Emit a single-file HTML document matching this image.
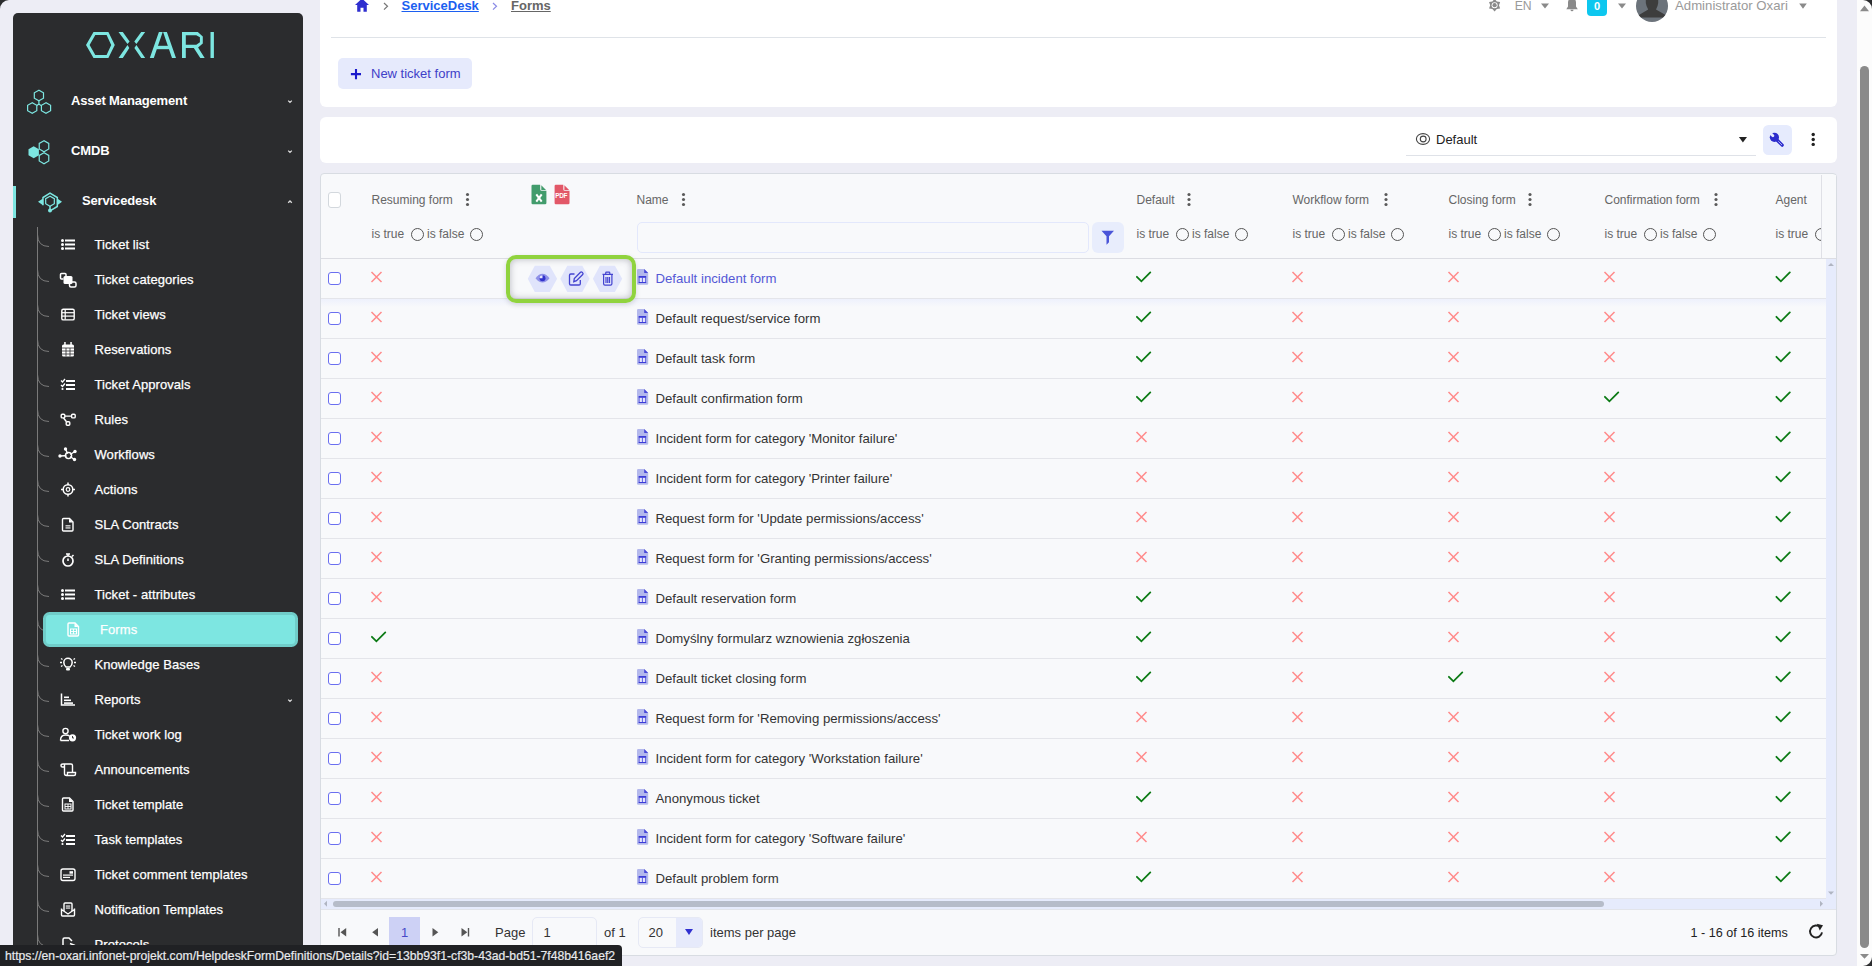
<!DOCTYPE html><html><head><meta charset="utf-8"><style>
*{box-sizing:border-box;margin:0;padding:0}
html,body{width:1872px;height:966px;overflow:hidden}
body{background:#ededf5;font-family:"Liberation Sans",sans-serif;position:relative;color:#333;font-size:13px}
.a{position:absolute;white-space:nowrap}
svg{position:absolute;overflow:visible}
#sb{position:absolute;left:13px;top:13px;width:290px;height:1000px;background:#2b2c2e;border-radius:5px}
.card{position:absolute;background:#fff;border-radius:6px}
.mi{position:absolute;color:#fff;font-size:13px;line-height:16px;height:16px;white-space:nowrap}
.top{font-weight:bold;letter-spacing:-0.15px}
.sub{-webkit-text-stroke:0.25px #fff;letter-spacing:0.08px}
.hd{position:absolute;color:#666;font-size:13px;line-height:16px;white-space:nowrap}
.rd{position:absolute;width:13px;height:13px;border:1px solid #555;border-radius:50%}
.cb{position:absolute;width:13px;height:13px;border:1px solid #6b6ff0;border-radius:3px;background:#fff}
.nm{position:absolute;color:#333;font-size:13px;line-height:16px;white-space:nowrap}
.sep{position:absolute;left:321px;width:1505px;height:1px;background:#e4e5ea}
</style></head><body>
<svg style="left:0;top:0" width="10" height="10"><path d="M0 0H9A9 9 0 0 0 0 9Z" fill="#2b2c2e"/></svg>
<div id="sb"></div>
<svg style="left:80px;top:25px" width="140" height="40" viewBox="80 25 140 40" fill="#7de6e1">
<path d="M86 44.9L93.5 32H108.4L114.8 44.9L108.4 57.9H93.5Z M89.6 44.9L95.3 54.9H106.6L111.2 44.9L106.6 35H95.3Z" fill-rule="evenodd"/>
<path d="M118.5 32H122.8L129.6 41.6L127.5 44.1Z M127.5 44.9L129.3 48L122.8 58H118.5Z M145.2 32H141.2L134.3 41.6L136.4 44.1Z M136.4 44.9L134.4 48L141.2 58H145.2Z"/>
<path d="M149.8 58L158.9 32H162.7L153.8 58Z M163.1 32H166.9L176 58H172Z"/>
<rect x="156.5" y="45.8" width="14" height="3.4"/>
<path d="M182 58V32H197.8L202.8 36.4V43.4L198.1 47.4L204.7 58H200.3L193.8 48H185.8V58Z M185.8 35.3V44.7H196.3L199.9 42.2V37.3L196.3 35.3Z" fill-rule="evenodd"/>
<rect x="210.5" y="32" width="3.4" height="26"/>
</svg>
<svg style="left:0;top:0" width="1" height="1"><g fill="none" stroke="#7de6e1" stroke-width="1.2">
<path d="M38.90,90.20 L34.31,92.85 L34.31,98.15 L38.90,100.80 L43.49,98.15 L43.49,92.85Z"/><path d="M32.20,102.70 L27.61,105.35 L27.61,110.65 L32.20,113.30 L36.79,110.65 L36.79,105.35Z"/><path d="M46.00,102.70 L41.41,105.35 L41.41,110.65 L46.00,113.30 L50.59,110.65 L50.59,105.35Z"/>
<path d="M38.9 100.8V104 M38.9 104L36.9 105.5 M38.9 104L41 105.5"/></g></svg>
<svg style="left:0;top:0" width="1" height="1"><path d="M33.70,146.20 L28.50,149.20 L28.50,155.20 L33.70,158.20 L38.90,155.20 L38.90,149.20Z" fill="#7de6e1"/><g fill="none" stroke="#7de6e1" stroke-width="1.2">
<path d="M44.00,140.70 L39.24,143.45 L39.24,148.95 L44.00,151.70 L48.76,148.95 L48.76,143.45Z"/><path d="M44.00,152.70 L39.24,155.45 L39.24,160.95 L44.00,163.70 L48.76,160.95 L48.76,155.45Z"/></g></svg>
<svg style="left:0;top:0" width="1" height="1"><g fill="none" stroke="#7de6e1" stroke-width="1.5">
<path d="M43 205.2V197.5L50 193.2L57.3 197.5V206.5L50.5 210.6"/><path d="M50 206V209.5"/></g>
<path d="M50.00,196.20 L45.67,198.70 L45.67,203.70 L50.00,206.20 L54.33,203.70 L54.33,198.70Z" fill="none" stroke="#7de6e1" stroke-width="1.2"/>
<path d="M38 201.8L43 198.4V205.2Z M62 201.8L57.3 198.4V205.2Z" fill="#7de6e1"/><circle cx="50" cy="210.5" r="2" fill="#7de6e1"/></svg>
<div class="mi top" style="left:71px;top:93px">Asset Management</div>
<div class="mi top" style="left:71px;top:143px">CMDB</div>
<div class="mi top" style="left:82px;top:193px">Servicedesk</div>
<svg style="left:0;top:0" width="1" height="1"><path d="M288.2 100.6 L290 102.4 L291.8 100.6" fill="none" stroke="#ddd" stroke-width="1.3"/></svg>
<svg style="left:0;top:0" width="1" height="1"><path d="M288.2 150.6 L290 152.4 L291.8 150.6" fill="none" stroke="#ddd" stroke-width="1.3"/></svg>
<svg style="left:0;top:0" width="1" height="1"><path d="M288.2 202.8 L290 201.0 L291.8 202.8" fill="none" stroke="#ddd" stroke-width="1.3"/></svg>
<svg style="left:0;top:0" width="1" height="1"><path d="M288.2 699.6 L290 701.4 L291.8 699.6" fill="none" stroke="#ddd" stroke-width="1.3"/></svg>
<div class="a" style="left:13px;top:186px;width:3px;height:32px;background:#7de6e1"></div>
<div class="a" style="left:37px;top:227px;width:1px;height:740px;background:#7a7a7a"></div>
<svg style="left:0;top:0" width="1" height="1"><path d="M37.5 234.5 Q37.5 246.5 49 246.5" fill="none" stroke="#7a7a7a" stroke-width="1"/></svg>
<svg style="left:0;top:0" width="1" height="1"><circle cx="62.5" cy="240.5" r="1.5" fill="#fff"/><rect x="65" y="239.5" width="10" height="2" fill="#fff"/><circle cx="62.5" cy="244.5" r="1.5" fill="#fff"/><rect x="65" y="243.5" width="10" height="2" fill="#fff"/><circle cx="62.5" cy="248.5" r="1.5" fill="#fff"/><rect x="65" y="247.5" width="10" height="2" fill="#fff"/></svg>
<div class="mi sub" style="left:94.5px;top:236.6px">Ticket list</div>
<svg style="left:0;top:0" width="1" height="1"><path d="M37.5 269.5 Q37.5 281.5 49 281.5" fill="none" stroke="#7a7a7a" stroke-width="1"/></svg>
<svg style="left:0;top:0" width="1" height="1"><path d="M66 277.0V274.5Q66 273.5 65 273.5H61.5Q60.5 273.5 60.5 274.5V278.0Q60.5 279.0 61.5 279.0H63.5" fill="none" stroke="#fff" stroke-width="1.5"/><rect x="63.5" y="276.0" width="9" height="8" rx="1.5" fill="#fff"/><path d="M71 282.0H74.5Q76 282.0 76 283.5V285.5Q76 287.0 74.5 287.0H71Q69.5 287.0 69.5 285.5V284.0" fill="none" stroke="#fff" stroke-width="1.5"/></svg>
<div class="mi sub" style="left:94.5px;top:271.6px">Ticket categories</div>
<svg style="left:0;top:0" width="1" height="1"><path d="M37.5 304.5 Q37.5 316.5 49 316.5" fill="none" stroke="#7a7a7a" stroke-width="1"/></svg>
<svg style="left:0;top:0" width="1" height="1"><rect x="61.8" y="309.3" width="12.4" height="10.6" rx="1.5" fill="none" stroke="#fff" stroke-width="1.4"/><rect x="62" y="312.09999999999997" width="12" height="1.2" fill="#fff"/><rect x="62" y="315.5" width="12" height="1.2" fill="#fff"/><rect x="64.6" y="309.5" width="1.2" height="10" fill="#fff"/></svg>
<div class="mi sub" style="left:94.5px;top:306.6px">Ticket views</div>
<svg style="left:0;top:0" width="1" height="1"><path d="M37.5 339.5 Q37.5 351.5 49 351.5" fill="none" stroke="#7a7a7a" stroke-width="1"/></svg>
<svg style="left:0;top:0" width="1" height="1"><rect x="62" y="344.5" width="12" height="12" rx="1.5" fill="#fff"/><rect x="64.2" y="342.0" width="1.5" height="3" fill="#fff"/><rect x="70.3" y="342.0" width="1.5" height="3" fill="#fff"/><path d="M62 348.0H74 M62 351.0H74 M62 354.0H74 M66 348.0V356.5 M70 348.0V356.5" stroke="#2b2c2e" stroke-width="0.8"/></svg>
<div class="mi sub" style="left:94.5px;top:341.6px">Reservations</div>
<svg style="left:0;top:0" width="1" height="1"><path d="M37.5 374.5 Q37.5 386.5 49 386.5" fill="none" stroke="#7a7a7a" stroke-width="1"/></svg>
<svg style="left:0;top:0" width="1" height="1"><path d="M61 380.5L62.5 382.0L65 379.0" fill="none" stroke="#fff" stroke-width="1.3"/><path d="M61 385.0L62.5 386.5L65 383.5" fill="none" stroke="#fff" stroke-width="1.3"/><circle cx="62.5" cy="389.0" r="1.1" fill="#fff"/><rect x="66" y="380.0" width="9" height="2" fill="#fff"/><rect x="66" y="384.0" width="9" height="2" fill="#fff"/><rect x="66" y="388.0" width="9" height="2" fill="#fff"/></svg>
<div class="mi sub" style="left:94.5px;top:376.6px">Ticket Approvals</div>
<svg style="left:0;top:0" width="1" height="1"><path d="M37.5 409.5 Q37.5 421.5 49 421.5" fill="none" stroke="#7a7a7a" stroke-width="1"/></svg>
<svg style="left:0;top:0" width="1" height="1"><rect x="61.2" y="414.3" width="3.6" height="3.6" rx="1" fill="none" stroke="#fff" stroke-width="1.4"/><rect x="71.6" y="414.3" width="3.6" height="3.6" rx="1" fill="none" stroke="#fff" stroke-width="1.4"/><rect x="66.2" y="421.7" width="3.6" height="3.6" rx="1" fill="none" stroke="#fff" stroke-width="1.4"/><path d="M65 416.1H71.4 M63.5 418.0L66.5 421.7" stroke="#fff" stroke-width="1.4"/></svg>
<div class="mi sub" style="left:94.5px;top:411.6px">Rules</div>
<svg style="left:0;top:0" width="1" height="1"><path d="M37.5 444.5 Q37.5 456.5 49 456.5" fill="none" stroke="#7a7a7a" stroke-width="1"/></svg>
<svg style="left:0;top:0" width="1" height="1"><circle cx="68.5" cy="455.5" r="3" fill="none" stroke="#fff" stroke-width="1.6"/><path d="M68.5 455.5L65.5 449.0 M68.5 455.5L75 451.5 M68.5 455.5L60 456.0 M68.5 455.5L74.5 459.5" stroke="#fff" stroke-width="1.4"/><circle cx="68.5" cy="455.5" r="2" fill="#2b2c2e"/><circle cx="65.5" cy="449.0" r="1.7" fill="#fff"/><circle cx="75" cy="451.5" r="1.7" fill="#fff"/><circle cx="60" cy="456.0" r="1.7" fill="#fff"/><circle cx="74.5" cy="459.5" r="1.7" fill="#fff"/></svg>
<div class="mi sub" style="left:94.5px;top:446.6px">Workflows</div>
<svg style="left:0;top:0" width="1" height="1"><path d="M37.5 479.5 Q37.5 491.5 49 491.5" fill="none" stroke="#7a7a7a" stroke-width="1"/></svg>
<svg style="left:0;top:0" width="1" height="1"><circle cx="68" cy="489.5" r="4.8" fill="none" stroke="#fff" stroke-width="1.5"/><circle cx="68" cy="489.5" r="1.8" fill="none" stroke="#fff" stroke-width="1.2"/><path d="M68 482.5V485.0 M68 494.0V496.5 M61 489.5H63.5 M72.5 489.5H75" stroke="#fff" stroke-width="1.5"/></svg>
<div class="mi sub" style="left:94.5px;top:481.6px">Actions</div>
<svg style="left:0;top:0" width="1" height="1"><path d="M37.5 514.5 Q37.5 526.5 49 526.5" fill="none" stroke="#7a7a7a" stroke-width="1"/></svg>
<svg style="left:0;top:0" width="1" height="1"><path d="M63.5 518.5H69.5L73 522.0V530.0Q73 531.0 72 531.0H63.5Q62.5 531.0 62.5 530.0V519.5Q62.5 518.5 63.5 518.5Z" fill="none" stroke="#fff" stroke-width="1.4"/><rect x="65.5" y="525.3" width="5" height="1.1" fill="#fff"/><rect x="65.5" y="527.4" width="5" height="1.1" fill="#fff"/><path d="M69 518.5V522.5H73Z" fill="#fff"/></svg>
<div class="mi sub" style="left:94.5px;top:516.6px">SLA Contracts</div>
<svg style="left:0;top:0" width="1" height="1"><path d="M37.5 549.5 Q37.5 561.5 49 561.5" fill="none" stroke="#7a7a7a" stroke-width="1"/></svg>
<svg style="left:0;top:0" width="1" height="1"><circle cx="68" cy="561.0" r="5" fill="none" stroke="#fff" stroke-width="1.7"/><path d="M66 554.0H70 M68 554.0V556.0 M68 561.0V558.5 M72 556.5L73.5 555.0" stroke="#fff" stroke-width="1.5"/></svg>
<div class="mi sub" style="left:94.5px;top:551.6px">SLA Definitions</div>
<svg style="left:0;top:0" width="1" height="1"><path d="M37.5 584.5 Q37.5 596.5 49 596.5" fill="none" stroke="#7a7a7a" stroke-width="1"/></svg>
<svg style="left:0;top:0" width="1" height="1"><circle cx="62.5" cy="590.5" r="1.5" fill="#fff"/><rect x="65" y="589.5" width="10" height="2" fill="#fff"/><circle cx="62.5" cy="594.5" r="1.5" fill="#fff"/><rect x="65" y="593.5" width="10" height="2" fill="#fff"/><circle cx="62.5" cy="598.5" r="1.5" fill="#fff"/><rect x="65" y="597.5" width="10" height="2" fill="#fff"/></svg>
<div class="mi sub" style="left:94.5px;top:586.6px">Ticket - attributes</div>
<svg style="left:0;top:0" width="1" height="1"><path d="M37.5 619.5 Q37.5 631.5 49 631.5" fill="none" stroke="#7a7a7a" stroke-width="1"/></svg>
<div class="a" style="left:43px;top:612.0px;width:255px;height:35px;background:#7de6e1;border-radius:6.5px;border:3px solid #70cdc9"></div>
<svg style="left:0;top:0" width="1" height="1"><path d="M69.0 623.0H75.0L78.5 626.5V635.0Q78.5 636.0 77.5 636.0H69.0Q68.0 636.0 68.0 635.0V624.0Q68.0 623.0 69.0 623.0Z" fill="none" stroke="#fff" stroke-width="1.4"/><path d="M74.5 623.0V627.0H78.5Z" fill="#fff"/><rect x="70.5" y="629.0" width="6" height="5" fill="none" stroke="#fff" stroke-width="1"/><path d="M70.5 631.5H76.5 M73.5 629.0V634.0" stroke="#fff" stroke-width="0.9"/></svg>
<div class="mi sub" style="left:100px;top:621.6px">Forms</div>
<svg style="left:0;top:0" width="1" height="1"><path d="M37.5 654.5 Q37.5 666.5 49 666.5" fill="none" stroke="#7a7a7a" stroke-width="1"/></svg>
<svg style="left:0;top:0" width="1" height="1"><path d="M66 667.0Q63.8 665.0 63.8 662.5A4.2 4.2 0 0 1 72.2 662.5Q72.2 665.0 70 667.0Z" fill="none" stroke="#fff" stroke-width="1.5"/><rect x="66" y="668.0" width="4" height="2.5" rx="1" fill="#fff"/><path d="M60 662.5H62 M74 662.5H76 M61 658.5L62.5 659.5 M75 658.5L73.5 659.5 M61 666.5L62.5 665.5 M75 666.5L73.5 665.5" stroke="#fff" stroke-width="1.3"/></svg>
<div class="mi sub" style="left:94.5px;top:656.6px">Knowledge Bases</div>
<svg style="left:0;top:0" width="1" height="1"><path d="M37.5 689.5 Q37.5 701.5 49 701.5" fill="none" stroke="#7a7a7a" stroke-width="1"/></svg>
<svg style="left:0;top:0" width="1" height="1"><path d="M61.5 693.5V705.0H75" fill="none" stroke="#fff" stroke-width="1.5"/><rect x="64" y="696.5" width="5" height="1.6" fill="#fff"/><rect x="64" y="699.5" width="7" height="1.6" fill="#fff"/><rect x="64" y="702.3" width="9" height="1.6" fill="#fff"/></svg>
<div class="mi sub" style="left:94.5px;top:691.6px">Reports</div>
<svg style="left:0;top:0" width="1" height="1"><path d="M37.5 724.5 Q37.5 736.5 49 736.5" fill="none" stroke="#7a7a7a" stroke-width="1"/></svg>
<svg style="left:0;top:0" width="1" height="1"><circle cx="65.5" cy="731.0" r="2.6" fill="none" stroke="#fff" stroke-width="1.4"/><path d="M60.5 740.5Q60.5 735.0 65.5 735.0Q68.5 735.0 69.5 736.0 M60.5 740.5H69" fill="none" stroke="#fff" stroke-width="1.4"/><circle cx="72.5" cy="737.8" r="3.6" fill="#fff"/><path d="M72.5 736.0V738.0H74" stroke="#2b2c2e" stroke-width="0.9" fill="none"/></svg>
<div class="mi sub" style="left:94.5px;top:726.6px">Ticket work log</div>
<svg style="left:0;top:0" width="1" height="1"><path d="M37.5 759.5 Q37.5 771.5 49 771.5" fill="none" stroke="#7a7a7a" stroke-width="1"/></svg>
<svg style="left:0;top:0" width="1" height="1"><path d="M63 764.0H71Q72.5 764.0 72.5 765.5V772.0 M64.5 764.0V773.5Q64.5 775.5 66.5 775.5H74Q75.5 775.5 75.5 774.0V772.5H67.5V774.0Q67.5 775.5 66 775.5 M63 764.0Q61 764.0 61 765.7Q61 767.0 62.5 767.0H64.5" fill="none" stroke="#fff" stroke-width="1.4"/></svg>
<div class="mi sub" style="left:94.5px;top:761.6px">Announcements</div>
<svg style="left:0;top:0" width="1" height="1"><path d="M37.5 794.5 Q37.5 806.5 49 806.5" fill="none" stroke="#7a7a7a" stroke-width="1"/></svg>
<svg style="left:0;top:0" width="1" height="1"><path d="M63.5 798.0H69.5L73 801.5V810.0Q73 811.0 72 811.0H63.5Q62.5 811.0 62.5 810.0V799.0Q62.5 798.0 63.5 798.0Z" fill="none" stroke="#fff" stroke-width="1.4"/><path d="M69 798.0V802.0H73Z" fill="#fff"/><rect x="65" y="804.0" width="6" height="5" fill="none" stroke="#fff" stroke-width="1"/><path d="M65 806.5H71 M68 804.0V809.0" stroke="#fff" stroke-width="0.9"/></svg>
<div class="mi sub" style="left:94.5px;top:796.6px">Ticket template</div>
<svg style="left:0;top:0" width="1" height="1"><path d="M37.5 829.5 Q37.5 841.5 49 841.5" fill="none" stroke="#7a7a7a" stroke-width="1"/></svg>
<svg style="left:0;top:0" width="1" height="1"><path d="M61 835.5L62.5 837.0L65 834.0" fill="none" stroke="#fff" stroke-width="1.3"/><path d="M61 840.0L62.5 841.5L65 838.5" fill="none" stroke="#fff" stroke-width="1.3"/><circle cx="62.5" cy="844.0" r="1.1" fill="#fff"/><rect x="66" y="835.0" width="9" height="2" fill="#fff"/><rect x="66" y="839.0" width="9" height="2" fill="#fff"/><rect x="66" y="843.0" width="9" height="2" fill="#fff"/></svg>
<div class="mi sub" style="left:94.5px;top:831.6px">Task templates</div>
<svg style="left:0;top:0" width="1" height="1"><path d="M37.5 864.5 Q37.5 876.5 49 876.5" fill="none" stroke="#7a7a7a" stroke-width="1"/></svg>
<svg style="left:0;top:0" width="1" height="1"><rect x="61" y="869.0" width="14" height="11.5" rx="2" fill="none" stroke="#fff" stroke-width="1.4"/><rect x="69.5" y="871.2" width="3.5" height="2.5" fill="#fff"/><rect x="63" y="874.5" width="10" height="1.2" fill="#fff"/><rect x="63" y="876.8" width="7" height="1.2" fill="#fff"/></svg>
<div class="mi sub" style="left:94.5px;top:866.6px">Ticket comment templates</div>
<svg style="left:0;top:0" width="1" height="1"><path d="M37.5 899.5 Q37.5 911.5 49 911.5" fill="none" stroke="#7a7a7a" stroke-width="1"/></svg>
<svg style="left:0;top:0" width="1" height="1"><path d="M61.5 908.5V915.0Q61.5 916.0 62.5 916.0H73.5Q74.5 916.0 74.5 915.0V908.5 M61.5 909.5L68 914.0L74.5 909.5" fill="none" stroke="#fff" stroke-width="1.4"/><path d="M64 911.0V904.0Q64 903.0 65 903.0H71Q72 903.0 72 904.0V911.0" fill="none" stroke="#fff" stroke-width="1.4"/><rect x="65.8" y="905.5" width="4.4" height="1.1" fill="#fff"/><rect x="65.8" y="907.5" width="4.4" height="1.1" fill="#fff"/></svg>
<div class="mi sub" style="left:94.5px;top:901.6px">Notification Templates</div>
<svg style="left:0;top:0" width="1" height="1"><path d="M37.5 934.5 Q37.5 946.5 49 946.5" fill="none" stroke="#7a7a7a" stroke-width="1"/></svg>
<svg style="left:0;top:0" width="1" height="1"><path d="M63 952.5V939.5Q63 938.0 64.5 938.0H69L72 941.0" fill="none" stroke="#fff" stroke-width="1.5"/><path d="M70 943.5L75 945.5" stroke="#fff" stroke-width="1.5"/></svg>
<div class="mi sub" style="left:94.5px;top:936.6px">Protocols</div>
<div class="card" style="left:320px;top:-10px;width:1517px;height:117px"></div>
<div class="card" style="left:320px;top:117px;width:1517px;height:46px"></div>
<div class="a" style="left:320px;top:173px;width:1517px;height:783px;background:#f8f9fb;border:1px solid #d8dce2;border-radius:4px"></div>
<svg style="left:0;top:0" width="1" height="1"><path d="M362 -1.5L355 5H357.2V11.8H360.5V7.8H363.5V11.8H366.8V5H369Z" fill="#2f2fcf"/></svg>
<svg style="left:0;top:0" width="1" height="1"><path d="M384 3L387.5 6.3L384 9.6" fill="none" stroke="#777" stroke-width="1.2"/><path d="M493 3L496.5 6.3L493 9.6" fill="none" stroke="#8a8ae6" stroke-width="1.2"/></svg>
<div class="a" style="left:401.5px;top:-2.5px;font-size:13px;line-height:15px;font-weight:bold;color:#1c5ff0;text-decoration:underline">ServiceDesk</div>
<div class="a" style="left:511px;top:-2.5px;font-size:13px;line-height:15px;font-weight:bold;color:#666;text-decoration:underline">Forms</div>
<svg style="left:0;top:0" width="1" height="1"><g transform="translate(1494.6 5.2)"><polygon points="0.00,-6.40 2.20,-3.81 5.54,-3.20 4.40,0.00 5.54,3.20 2.20,3.81 0.00,6.40 -2.20,3.81 -5.54,3.20 -4.40,0.00 -5.54,-3.20 -2.20,-3.81" fill="#8a8a8a"/><circle r="3" fill="#fff"/><circle r="2.1" fill="#8a8a8a"/></g></svg>
<div class="a" style="left:1514.7px;top:-1.5px;font-size:12.2px;line-height:15px;color:#9a9a9a">EN</div>
<svg style="left:0;top:0" width="1" height="1"><path d="M1541 3.5H1549L1545 8.6Z M1618 3.5H1626L1622 8.6Z M1799.2 3.5H1806.8L1803 8.7Z" fill="#8a8a8a"/></svg>
<svg style="left:0;top:0" width="1" height="1"><path d="M1572 -2C1569.5 -2 1568 0 1568 2.5V6.5L1566.3 9.3H1577.8L1576 6.5V2.5C1576 0 1574.5 -2 1572 -2Z M1570.5 9.8H1573.5A1.5 1.5 0 0 1 1570.5 9.8Z" fill="#8a8a8a"/></svg>
<div class="a" style="left:1587px;top:-5px;width:20px;height:21px;background:#0dc7ef;border-radius:4px;color:#fff;font-weight:bold;font-size:11px;line-height:21px;text-align:center;padding-top:1px">0</div>
<svg style="left:0;top:0" width="1" height="1"><defs><clipPath id="av"><circle cx="1652" cy="6" r="16"/></clipPath></defs><circle cx="1652" cy="6" r="16" fill="#6c737b"/><g clip-path="url(#av)" fill="#3d3d3d"><path d="M1645.8 -4V3Q1646.3 6.5 1648.2 9.6L1638.5 15.3V17.6H1666V15.3L1656 9.6Q1657.8 6.5 1658.2 3V-4Z"/></g></svg>
<div class="a" style="left:1675px;top:-2px;font-size:13.2px;line-height:15px;color:#9a9a9a">Administrator Oxari</div>
<div class="a" style="left:331px;top:37px;width:1495px;height:1px;background:#dfe3e8"></div>
<div class="a" style="left:338px;top:58px;width:134px;height:31px;background:#e6eafc;border-radius:5px"></div>
<svg style="left:0;top:0" width="1" height="1"><path d="M356 69V79.2 M350.9 74.1H361" stroke="#1a1acc" stroke-width="2.1"/></svg>
<div class="a" style="left:371px;top:66px;font-size:13px;line-height:16px;color:#4040c8">New ticket form</div>
<div class="a" style="left:1406px;top:155px;width:350px;height:1px;background:#dfe2e8"></div>
<svg style="left:0;top:0" width="1" height="1"><g fill="none" stroke="#444" stroke-width="1.1"><ellipse cx="1423" cy="139" rx="6.6" ry="5.4"/><circle cx="1423.2" cy="139" r="2.9"/></g></svg>
<div class="a" style="left:1436px;top:131.5px;font-size:13px;line-height:16px;color:#222">Default</div>
<svg style="left:0;top:0" width="1" height="1"><path d="M1738.9 137H1747L1742.9 142.6Z" fill="#222"/></svg>
<div class="a" style="left:1763px;top:125px;width:29px;height:30px;background:#e6ebfd;border-radius:5.5px"></div>
<svg style="left:0;top:0" width="1" height="1"><path d="M1777 140L1782.2 145.2" stroke="#2c2ccc" stroke-width="3.2" stroke-linecap="round"/><path d="M1778.3 141.3L1782 145" stroke="#c8cdf5" stroke-width="0.8"/><circle cx="1774.4" cy="137.3" r="4.6" fill="#2c2ccc"/><path d="M1768.8 131.7L1772.9 135.8" stroke="#e6ebfd" stroke-width="2.8" stroke-linecap="round"/></svg>
<svg style="left:0;top:0" width="1" height="1"><g fill="#222"><circle cx="1813.2" cy="134.5" r="1.7"/><circle cx="1813.2" cy="139.5" r="1.7"/><circle cx="1813.2" cy="144.4" r="1.7"/></g></svg>
<div class="a" style="left:328px;top:192px;width:13px;height:15.5px;border:1px solid #d3d8dd;border-radius:3px;background:#fff"></div>
<div class="hd" style="left:371.5px;top:192.3px;font-size:12px">Resuming form</div>
<svg style="left:0;top:0" width="1" height="1"><g fill="#5a5a5a"><circle cx="467.5" cy="194.5" r="1.55"/><circle cx="467.5" cy="199.5" r="1.55"/><circle cx="467.5" cy="204.5" r="1.55"/></g></svg>
<div class="hd" style="left:371.5px;top:226px;font-size:12px">is true</div>
<div class="rd" style="left:411.0px;top:227.5px"></div>
<div class="hd" style="left:427.0px;top:226px;font-size:12px">is false</div>
<div class="rd" style="left:470.0px;top:227.5px"></div>
<div class="hd" style="left:636.5px;top:192.3px;font-size:12px">Name</div>
<svg style="left:0;top:0" width="1" height="1"><g fill="#5a5a5a"><circle cx="683.5" cy="194.5" r="1.55"/><circle cx="683.5" cy="199.5" r="1.55"/><circle cx="683.5" cy="204.5" r="1.55"/></g></svg>
<div class="hd" style="left:1136.5px;top:192.3px;font-size:12px">Default</div>
<svg style="left:0;top:0" width="1" height="1"><g fill="#5a5a5a"><circle cx="1189" cy="194.5" r="1.55"/><circle cx="1189" cy="199.5" r="1.55"/><circle cx="1189" cy="204.5" r="1.55"/></g></svg>
<div class="hd" style="left:1136.5px;top:226px;font-size:12px">is true</div>
<div class="rd" style="left:1176.0px;top:227.5px"></div>
<div class="hd" style="left:1192.0px;top:226px;font-size:12px">is false</div>
<div class="rd" style="left:1235.0px;top:227.5px"></div>
<div class="hd" style="left:1292.5px;top:192.3px;font-size:12px">Workflow form</div>
<svg style="left:0;top:0" width="1" height="1"><g fill="#5a5a5a"><circle cx="1386" cy="194.5" r="1.55"/><circle cx="1386" cy="199.5" r="1.55"/><circle cx="1386" cy="204.5" r="1.55"/></g></svg>
<div class="hd" style="left:1292.5px;top:226px;font-size:12px">is true</div>
<div class="rd" style="left:1332.0px;top:227.5px"></div>
<div class="hd" style="left:1348.0px;top:226px;font-size:12px">is false</div>
<div class="rd" style="left:1391.0px;top:227.5px"></div>
<div class="hd" style="left:1448.5px;top:192.3px;font-size:12px">Closing form</div>
<svg style="left:0;top:0" width="1" height="1"><g fill="#5a5a5a"><circle cx="1530" cy="194.5" r="1.55"/><circle cx="1530" cy="199.5" r="1.55"/><circle cx="1530" cy="204.5" r="1.55"/></g></svg>
<div class="hd" style="left:1448.5px;top:226px;font-size:12px">is true</div>
<div class="rd" style="left:1488.0px;top:227.5px"></div>
<div class="hd" style="left:1504.0px;top:226px;font-size:12px">is false</div>
<div class="rd" style="left:1547.0px;top:227.5px"></div>
<div class="hd" style="left:1604.5px;top:192.3px;font-size:12px">Confirmation form</div>
<svg style="left:0;top:0" width="1" height="1"><g fill="#5a5a5a"><circle cx="1716" cy="194.5" r="1.55"/><circle cx="1716" cy="199.5" r="1.55"/><circle cx="1716" cy="204.5" r="1.55"/></g></svg>
<div class="hd" style="left:1604.5px;top:226px;font-size:12px">is true</div>
<div class="rd" style="left:1644.0px;top:227.5px"></div>
<div class="hd" style="left:1660.0px;top:226px;font-size:12px">is false</div>
<div class="rd" style="left:1703.0px;top:227.5px"></div>
<div class="hd" style="left:1775.5px;top:192.3px;font-size:12px">Agent</div>
<div class="hd" style="left:1775.5px;top:226px;font-size:12px">is true</div>
<div class="rd" style="left:1815.0px;top:227.5px"></div>
<div class="a" style="left:637px;top:222px;width:452px;height:31px;border:1px solid #e3e8fc;border-radius:5px;background:#f8f9fb"></div>
<div class="a" style="left:1092px;top:222px;width:32px;height:31px;background:#e8edfc;border-radius:6px"></div>
<svg style="left:0;top:0" width="1" height="1"><path d="M1101.5 230.8H1114L1109 236.3V242.3L1106.5 244.7V236.3Z" fill="#4a55d8"/></svg>
<svg style="left:0;top:0" width="1" height="1"><path d="M532.7 184.7H540.2V189.3Q540.2 190.8 541.7 190.8H546.4V203Q546.4 204.3 545.1 204.3H532.7Q531.5 204.3 531.5 203V186Q531.5 184.7 532.7 184.7Z" fill="#429c6c"/><path d="M541.3 185.3L546.0 189.9H541.3Z" fill="#429c6c"/><path d="M536.3 194.3L541.7 201.7M541.7 194.3L536.3 201.7" stroke="#fff" stroke-width="2"/></svg>
<svg style="left:0;top:0" width="1" height="1"><path d="M555.8000000000001 184.7H563.3000000000001V189.3Q563.3000000000001 190.8 564.8000000000001 190.8H569.5V203Q569.5 204.3 568.2 204.3H555.8000000000001Q554.6 204.3 554.6 203V186Q554.6 184.7 555.8000000000001 184.7Z" fill="#e25868"/><path d="M564.4 185.3L569.1 189.9H564.4Z" fill="#e25868"/></svg>
<div class="a" style="left:554.3px;top:191.4px;width:13.5px;font-size:7.8px;line-height:9px;font-weight:bold;color:#fff;text-align:center;letter-spacing:-0.3px;transform:scaleX(0.82);transform-origin:center">PDF</div>
<div class="a" style="left:1822px;top:175px;width:14px;height:83px;background:#f8f9fb"></div>
<div class="a" style="left:1821px;top:175px;width:1px;height:83px;background:#dfe0e6"></div>
<div class="a" style="left:321px;top:258px;width:1515px;height:1px;background:#dcdde3"></div>
<div class="sep" style="top:298px"></div>
<div class="cb" style="left:328px;top:272px"></div>
<div class="nm" style="left:655.5px;top:271px;color:#5458d6;font-size:13.2px">Default incident form</div>
<div class="sep" style="top:338px"></div>
<div class="cb" style="left:328px;top:312px"></div>
<div class="nm" style="left:655.5px;top:311px;color:#333;font-size:13.2px">Default request/service form</div>
<div class="sep" style="top:378px"></div>
<div class="cb" style="left:328px;top:352px"></div>
<div class="nm" style="left:655.5px;top:351px;color:#333;font-size:13.2px">Default task form</div>
<div class="sep" style="top:418px"></div>
<div class="cb" style="left:328px;top:392px"></div>
<div class="nm" style="left:655.5px;top:391px;color:#333;font-size:13.2px">Default confirmation form</div>
<div class="sep" style="top:458px"></div>
<div class="cb" style="left:328px;top:432px"></div>
<div class="nm" style="left:655.5px;top:431px;color:#333;font-size:13.2px">Incident form for category 'Monitor failure'</div>
<div class="sep" style="top:498px"></div>
<div class="cb" style="left:328px;top:472px"></div>
<div class="nm" style="left:655.5px;top:471px;color:#333;font-size:13.2px">Incident form for category 'Printer failure'</div>
<div class="sep" style="top:538px"></div>
<div class="cb" style="left:328px;top:512px"></div>
<div class="nm" style="left:655.5px;top:511px;color:#333;font-size:13.2px">Request form for 'Update permissions/access'</div>
<div class="sep" style="top:578px"></div>
<div class="cb" style="left:328px;top:552px"></div>
<div class="nm" style="left:655.5px;top:551px;color:#333;font-size:13.2px">Request form for 'Granting permissions/access'</div>
<div class="sep" style="top:618px"></div>
<div class="cb" style="left:328px;top:592px"></div>
<div class="nm" style="left:655.5px;top:591px;color:#333;font-size:13.2px">Default reservation form</div>
<div class="sep" style="top:658px"></div>
<div class="cb" style="left:328px;top:632px"></div>
<div class="nm" style="left:655.5px;top:631px;color:#333;font-size:13.2px">Domyślny formularz wznowienia zgłoszenia</div>
<div class="sep" style="top:698px"></div>
<div class="cb" style="left:328px;top:672px"></div>
<div class="nm" style="left:655.5px;top:671px;color:#333;font-size:13.2px">Default ticket closing form</div>
<div class="sep" style="top:738px"></div>
<div class="cb" style="left:328px;top:712px"></div>
<div class="nm" style="left:655.5px;top:711px;color:#333;font-size:13.2px">Request form for 'Removing permissions/access'</div>
<div class="sep" style="top:778px"></div>
<div class="cb" style="left:328px;top:752px"></div>
<div class="nm" style="left:655.5px;top:751px;color:#333;font-size:13.2px">Incident form for category 'Workstation failure'</div>
<div class="sep" style="top:818px"></div>
<div class="cb" style="left:328px;top:792px"></div>
<div class="nm" style="left:655.5px;top:791px;color:#333;font-size:13.2px">Anonymous ticket</div>
<div class="sep" style="top:858px"></div>
<div class="cb" style="left:328px;top:832px"></div>
<div class="nm" style="left:655.5px;top:831px;color:#333;font-size:13.2px">Incident form for category 'Software failure'</div>
<div class="sep" style="top:898px"></div>
<div class="cb" style="left:328px;top:872px"></div>
<div class="nm" style="left:655.5px;top:871px;color:#333;font-size:13.2px">Default problem form</div>
<svg style="left:0;top:0" width="1" height="1"><path d="M638.2 269H644.2L648.2 273V283.5Q648.2 284.7 647 284.7H638.2Q637 284.7 637 283.5V270.2Q637 269 638.2 269Z" fill="#b3b8ec"/><path d="M644.2 269V273H648.2Z" fill="#4848d8"/><rect x="639" y="277.8" width="6.8" height="4.3" fill="#e4e6fc"/><path d="M638.6 276H646.2V277.8H638.6Z M638.6 282H646.2V283H638.6Z" fill="#3c3cd8"/><path d="M639.2 277.5V282.2 M642.4 277.5V282.2 M645.6 277.5V282.2" stroke="#3c3cd8" stroke-width="0.8"/><path d="M371.5 272L381.5 282M381.5 272L371.5 282" stroke="#ff8a8a" stroke-width="1.5"/><path d="M1136.9 276.8L1141.4 281.3L1150.3 272.4" fill="none" stroke="#0b7a14" stroke-width="1.8" stroke-linecap="round"/><path d="M1292.5 272L1302.5 282M1302.5 272L1292.5 282" stroke="#ff8a8a" stroke-width="1.5"/><path d="M1448.5 272L1458.5 282M1458.5 272L1448.5 282" stroke="#ff8a8a" stroke-width="1.5"/><path d="M1604.5 272L1614.5 282M1614.5 272L1604.5 282" stroke="#ff8a8a" stroke-width="1.5"/><path d="M1776.4 276.8L1780.9 281.3L1789.8 272.4" fill="none" stroke="#0b7a14" stroke-width="1.8" stroke-linecap="round"/><path d="M638.2 309H644.2L648.2 313V323.5Q648.2 324.7 647 324.7H638.2Q637 324.7 637 323.5V310.2Q637 309 638.2 309Z" fill="#b3b8ec"/><path d="M644.2 309V313H648.2Z" fill="#4848d8"/><rect x="639" y="317.8" width="6.8" height="4.3" fill="#e4e6fc"/><path d="M638.6 316H646.2V317.8H638.6Z M638.6 322H646.2V323H638.6Z" fill="#3c3cd8"/><path d="M639.2 317.5V322.2 M642.4 317.5V322.2 M645.6 317.5V322.2" stroke="#3c3cd8" stroke-width="0.8"/><path d="M371.5 312L381.5 322M381.5 312L371.5 322" stroke="#ff8a8a" stroke-width="1.5"/><path d="M1136.9 316.8L1141.4 321.3L1150.3 312.4" fill="none" stroke="#0b7a14" stroke-width="1.8" stroke-linecap="round"/><path d="M1292.5 312L1302.5 322M1302.5 312L1292.5 322" stroke="#ff8a8a" stroke-width="1.5"/><path d="M1448.5 312L1458.5 322M1458.5 312L1448.5 322" stroke="#ff8a8a" stroke-width="1.5"/><path d="M1604.5 312L1614.5 322M1614.5 312L1604.5 322" stroke="#ff8a8a" stroke-width="1.5"/><path d="M1776.4 316.8L1780.9 321.3L1789.8 312.4" fill="none" stroke="#0b7a14" stroke-width="1.8" stroke-linecap="round"/><path d="M638.2 349H644.2L648.2 353V363.5Q648.2 364.7 647 364.7H638.2Q637 364.7 637 363.5V350.2Q637 349 638.2 349Z" fill="#b3b8ec"/><path d="M644.2 349V353H648.2Z" fill="#4848d8"/><rect x="639" y="357.8" width="6.8" height="4.3" fill="#e4e6fc"/><path d="M638.6 356H646.2V357.8H638.6Z M638.6 362H646.2V363H638.6Z" fill="#3c3cd8"/><path d="M639.2 357.5V362.2 M642.4 357.5V362.2 M645.6 357.5V362.2" stroke="#3c3cd8" stroke-width="0.8"/><path d="M371.5 352L381.5 362M381.5 352L371.5 362" stroke="#ff8a8a" stroke-width="1.5"/><path d="M1136.9 356.8L1141.4 361.3L1150.3 352.4" fill="none" stroke="#0b7a14" stroke-width="1.8" stroke-linecap="round"/><path d="M1292.5 352L1302.5 362M1302.5 352L1292.5 362" stroke="#ff8a8a" stroke-width="1.5"/><path d="M1448.5 352L1458.5 362M1458.5 352L1448.5 362" stroke="#ff8a8a" stroke-width="1.5"/><path d="M1604.5 352L1614.5 362M1614.5 352L1604.5 362" stroke="#ff8a8a" stroke-width="1.5"/><path d="M1776.4 356.8L1780.9 361.3L1789.8 352.4" fill="none" stroke="#0b7a14" stroke-width="1.8" stroke-linecap="round"/><path d="M638.2 389H644.2L648.2 393V403.5Q648.2 404.7 647 404.7H638.2Q637 404.7 637 403.5V390.2Q637 389 638.2 389Z" fill="#b3b8ec"/><path d="M644.2 389V393H648.2Z" fill="#4848d8"/><rect x="639" y="397.8" width="6.8" height="4.3" fill="#e4e6fc"/><path d="M638.6 396H646.2V397.8H638.6Z M638.6 402H646.2V403H638.6Z" fill="#3c3cd8"/><path d="M639.2 397.5V402.2 M642.4 397.5V402.2 M645.6 397.5V402.2" stroke="#3c3cd8" stroke-width="0.8"/><path d="M371.5 392L381.5 402M381.5 392L371.5 402" stroke="#ff8a8a" stroke-width="1.5"/><path d="M1136.9 396.8L1141.4 401.3L1150.3 392.4" fill="none" stroke="#0b7a14" stroke-width="1.8" stroke-linecap="round"/><path d="M1292.5 392L1302.5 402M1302.5 392L1292.5 402" stroke="#ff8a8a" stroke-width="1.5"/><path d="M1448.5 392L1458.5 402M1458.5 392L1448.5 402" stroke="#ff8a8a" stroke-width="1.5"/><path d="M1604.9 396.8L1609.4 401.3L1618.3 392.4" fill="none" stroke="#0b7a14" stroke-width="1.8" stroke-linecap="round"/><path d="M1776.4 396.8L1780.9 401.3L1789.8 392.4" fill="none" stroke="#0b7a14" stroke-width="1.8" stroke-linecap="round"/><path d="M638.2 429H644.2L648.2 433V443.5Q648.2 444.7 647 444.7H638.2Q637 444.7 637 443.5V430.2Q637 429 638.2 429Z" fill="#b3b8ec"/><path d="M644.2 429V433H648.2Z" fill="#4848d8"/><rect x="639" y="437.8" width="6.8" height="4.3" fill="#e4e6fc"/><path d="M638.6 436H646.2V437.8H638.6Z M638.6 442H646.2V443H638.6Z" fill="#3c3cd8"/><path d="M639.2 437.5V442.2 M642.4 437.5V442.2 M645.6 437.5V442.2" stroke="#3c3cd8" stroke-width="0.8"/><path d="M371.5 432L381.5 442M381.5 432L371.5 442" stroke="#ff8a8a" stroke-width="1.5"/><path d="M1136.5 432L1146.5 442M1146.5 432L1136.5 442" stroke="#ff8a8a" stroke-width="1.5"/><path d="M1292.5 432L1302.5 442M1302.5 432L1292.5 442" stroke="#ff8a8a" stroke-width="1.5"/><path d="M1448.5 432L1458.5 442M1458.5 432L1448.5 442" stroke="#ff8a8a" stroke-width="1.5"/><path d="M1604.5 432L1614.5 442M1614.5 432L1604.5 442" stroke="#ff8a8a" stroke-width="1.5"/><path d="M1776.4 436.8L1780.9 441.3L1789.8 432.4" fill="none" stroke="#0b7a14" stroke-width="1.8" stroke-linecap="round"/><path d="M638.2 469H644.2L648.2 473V483.5Q648.2 484.7 647 484.7H638.2Q637 484.7 637 483.5V470.2Q637 469 638.2 469Z" fill="#b3b8ec"/><path d="M644.2 469V473H648.2Z" fill="#4848d8"/><rect x="639" y="477.8" width="6.8" height="4.3" fill="#e4e6fc"/><path d="M638.6 476H646.2V477.8H638.6Z M638.6 482H646.2V483H638.6Z" fill="#3c3cd8"/><path d="M639.2 477.5V482.2 M642.4 477.5V482.2 M645.6 477.5V482.2" stroke="#3c3cd8" stroke-width="0.8"/><path d="M371.5 472L381.5 482M381.5 472L371.5 482" stroke="#ff8a8a" stroke-width="1.5"/><path d="M1136.5 472L1146.5 482M1146.5 472L1136.5 482" stroke="#ff8a8a" stroke-width="1.5"/><path d="M1292.5 472L1302.5 482M1302.5 472L1292.5 482" stroke="#ff8a8a" stroke-width="1.5"/><path d="M1448.5 472L1458.5 482M1458.5 472L1448.5 482" stroke="#ff8a8a" stroke-width="1.5"/><path d="M1604.5 472L1614.5 482M1614.5 472L1604.5 482" stroke="#ff8a8a" stroke-width="1.5"/><path d="M1776.4 476.8L1780.9 481.3L1789.8 472.4" fill="none" stroke="#0b7a14" stroke-width="1.8" stroke-linecap="round"/><path d="M638.2 509H644.2L648.2 513V523.5Q648.2 524.7 647 524.7H638.2Q637 524.7 637 523.5V510.2Q637 509 638.2 509Z" fill="#b3b8ec"/><path d="M644.2 509V513H648.2Z" fill="#4848d8"/><rect x="639" y="517.8" width="6.8" height="4.3" fill="#e4e6fc"/><path d="M638.6 516H646.2V517.8H638.6Z M638.6 522H646.2V523H638.6Z" fill="#3c3cd8"/><path d="M639.2 517.5V522.2 M642.4 517.5V522.2 M645.6 517.5V522.2" stroke="#3c3cd8" stroke-width="0.8"/><path d="M371.5 512L381.5 522M381.5 512L371.5 522" stroke="#ff8a8a" stroke-width="1.5"/><path d="M1136.5 512L1146.5 522M1146.5 512L1136.5 522" stroke="#ff8a8a" stroke-width="1.5"/><path d="M1292.5 512L1302.5 522M1302.5 512L1292.5 522" stroke="#ff8a8a" stroke-width="1.5"/><path d="M1448.5 512L1458.5 522M1458.5 512L1448.5 522" stroke="#ff8a8a" stroke-width="1.5"/><path d="M1604.5 512L1614.5 522M1614.5 512L1604.5 522" stroke="#ff8a8a" stroke-width="1.5"/><path d="M1776.4 516.8L1780.9 521.3L1789.8 512.4" fill="none" stroke="#0b7a14" stroke-width="1.8" stroke-linecap="round"/><path d="M638.2 549H644.2L648.2 553V563.5Q648.2 564.7 647 564.7H638.2Q637 564.7 637 563.5V550.2Q637 549 638.2 549Z" fill="#b3b8ec"/><path d="M644.2 549V553H648.2Z" fill="#4848d8"/><rect x="639" y="557.8" width="6.8" height="4.3" fill="#e4e6fc"/><path d="M638.6 556H646.2V557.8H638.6Z M638.6 562H646.2V563H638.6Z" fill="#3c3cd8"/><path d="M639.2 557.5V562.2 M642.4 557.5V562.2 M645.6 557.5V562.2" stroke="#3c3cd8" stroke-width="0.8"/><path d="M371.5 552L381.5 562M381.5 552L371.5 562" stroke="#ff8a8a" stroke-width="1.5"/><path d="M1136.5 552L1146.5 562M1146.5 552L1136.5 562" stroke="#ff8a8a" stroke-width="1.5"/><path d="M1292.5 552L1302.5 562M1302.5 552L1292.5 562" stroke="#ff8a8a" stroke-width="1.5"/><path d="M1448.5 552L1458.5 562M1458.5 552L1448.5 562" stroke="#ff8a8a" stroke-width="1.5"/><path d="M1604.5 552L1614.5 562M1614.5 552L1604.5 562" stroke="#ff8a8a" stroke-width="1.5"/><path d="M1776.4 556.8L1780.9 561.3L1789.8 552.4" fill="none" stroke="#0b7a14" stroke-width="1.8" stroke-linecap="round"/><path d="M638.2 589H644.2L648.2 593V603.5Q648.2 604.7 647 604.7H638.2Q637 604.7 637 603.5V590.2Q637 589 638.2 589Z" fill="#b3b8ec"/><path d="M644.2 589V593H648.2Z" fill="#4848d8"/><rect x="639" y="597.8" width="6.8" height="4.3" fill="#e4e6fc"/><path d="M638.6 596H646.2V597.8H638.6Z M638.6 602H646.2V603H638.6Z" fill="#3c3cd8"/><path d="M639.2 597.5V602.2 M642.4 597.5V602.2 M645.6 597.5V602.2" stroke="#3c3cd8" stroke-width="0.8"/><path d="M371.5 592L381.5 602M381.5 592L371.5 602" stroke="#ff8a8a" stroke-width="1.5"/><path d="M1136.9 596.8L1141.4 601.3L1150.3 592.4" fill="none" stroke="#0b7a14" stroke-width="1.8" stroke-linecap="round"/><path d="M1292.5 592L1302.5 602M1302.5 592L1292.5 602" stroke="#ff8a8a" stroke-width="1.5"/><path d="M1448.5 592L1458.5 602M1458.5 592L1448.5 602" stroke="#ff8a8a" stroke-width="1.5"/><path d="M1604.5 592L1614.5 602M1614.5 592L1604.5 602" stroke="#ff8a8a" stroke-width="1.5"/><path d="M1776.4 596.8L1780.9 601.3L1789.8 592.4" fill="none" stroke="#0b7a14" stroke-width="1.8" stroke-linecap="round"/><path d="M638.2 629H644.2L648.2 633V643.5Q648.2 644.7 647 644.7H638.2Q637 644.7 637 643.5V630.2Q637 629 638.2 629Z" fill="#b3b8ec"/><path d="M644.2 629V633H648.2Z" fill="#4848d8"/><rect x="639" y="637.8" width="6.8" height="4.3" fill="#e4e6fc"/><path d="M638.6 636H646.2V637.8H638.6Z M638.6 642H646.2V643H638.6Z" fill="#3c3cd8"/><path d="M639.2 637.5V642.2 M642.4 637.5V642.2 M645.6 637.5V642.2" stroke="#3c3cd8" stroke-width="0.8"/><path d="M371.9 636.8L376.4 641.3L385.3 632.4" fill="none" stroke="#0b7a14" stroke-width="1.8" stroke-linecap="round"/><path d="M1136.9 636.8L1141.4 641.3L1150.3 632.4" fill="none" stroke="#0b7a14" stroke-width="1.8" stroke-linecap="round"/><path d="M1292.5 632L1302.5 642M1302.5 632L1292.5 642" stroke="#ff8a8a" stroke-width="1.5"/><path d="M1448.5 632L1458.5 642M1458.5 632L1448.5 642" stroke="#ff8a8a" stroke-width="1.5"/><path d="M1604.5 632L1614.5 642M1614.5 632L1604.5 642" stroke="#ff8a8a" stroke-width="1.5"/><path d="M1776.4 636.8L1780.9 641.3L1789.8 632.4" fill="none" stroke="#0b7a14" stroke-width="1.8" stroke-linecap="round"/><path d="M638.2 669H644.2L648.2 673V683.5Q648.2 684.7 647 684.7H638.2Q637 684.7 637 683.5V670.2Q637 669 638.2 669Z" fill="#b3b8ec"/><path d="M644.2 669V673H648.2Z" fill="#4848d8"/><rect x="639" y="677.8" width="6.8" height="4.3" fill="#e4e6fc"/><path d="M638.6 676H646.2V677.8H638.6Z M638.6 682H646.2V683H638.6Z" fill="#3c3cd8"/><path d="M639.2 677.5V682.2 M642.4 677.5V682.2 M645.6 677.5V682.2" stroke="#3c3cd8" stroke-width="0.8"/><path d="M371.5 672L381.5 682M381.5 672L371.5 682" stroke="#ff8a8a" stroke-width="1.5"/><path d="M1136.9 676.8L1141.4 681.3L1150.3 672.4" fill="none" stroke="#0b7a14" stroke-width="1.8" stroke-linecap="round"/><path d="M1292.5 672L1302.5 682M1302.5 672L1292.5 682" stroke="#ff8a8a" stroke-width="1.5"/><path d="M1448.9 676.8L1453.4 681.3L1462.3 672.4" fill="none" stroke="#0b7a14" stroke-width="1.8" stroke-linecap="round"/><path d="M1604.5 672L1614.5 682M1614.5 672L1604.5 682" stroke="#ff8a8a" stroke-width="1.5"/><path d="M1776.4 676.8L1780.9 681.3L1789.8 672.4" fill="none" stroke="#0b7a14" stroke-width="1.8" stroke-linecap="round"/><path d="M638.2 709H644.2L648.2 713V723.5Q648.2 724.7 647 724.7H638.2Q637 724.7 637 723.5V710.2Q637 709 638.2 709Z" fill="#b3b8ec"/><path d="M644.2 709V713H648.2Z" fill="#4848d8"/><rect x="639" y="717.8" width="6.8" height="4.3" fill="#e4e6fc"/><path d="M638.6 716H646.2V717.8H638.6Z M638.6 722H646.2V723H638.6Z" fill="#3c3cd8"/><path d="M639.2 717.5V722.2 M642.4 717.5V722.2 M645.6 717.5V722.2" stroke="#3c3cd8" stroke-width="0.8"/><path d="M371.5 712L381.5 722M381.5 712L371.5 722" stroke="#ff8a8a" stroke-width="1.5"/><path d="M1136.5 712L1146.5 722M1146.5 712L1136.5 722" stroke="#ff8a8a" stroke-width="1.5"/><path d="M1292.5 712L1302.5 722M1302.5 712L1292.5 722" stroke="#ff8a8a" stroke-width="1.5"/><path d="M1448.5 712L1458.5 722M1458.5 712L1448.5 722" stroke="#ff8a8a" stroke-width="1.5"/><path d="M1604.5 712L1614.5 722M1614.5 712L1604.5 722" stroke="#ff8a8a" stroke-width="1.5"/><path d="M1776.4 716.8L1780.9 721.3L1789.8 712.4" fill="none" stroke="#0b7a14" stroke-width="1.8" stroke-linecap="round"/><path d="M638.2 749H644.2L648.2 753V763.5Q648.2 764.7 647 764.7H638.2Q637 764.7 637 763.5V750.2Q637 749 638.2 749Z" fill="#b3b8ec"/><path d="M644.2 749V753H648.2Z" fill="#4848d8"/><rect x="639" y="757.8" width="6.8" height="4.3" fill="#e4e6fc"/><path d="M638.6 756H646.2V757.8H638.6Z M638.6 762H646.2V763H638.6Z" fill="#3c3cd8"/><path d="M639.2 757.5V762.2 M642.4 757.5V762.2 M645.6 757.5V762.2" stroke="#3c3cd8" stroke-width="0.8"/><path d="M371.5 752L381.5 762M381.5 752L371.5 762" stroke="#ff8a8a" stroke-width="1.5"/><path d="M1136.5 752L1146.5 762M1146.5 752L1136.5 762" stroke="#ff8a8a" stroke-width="1.5"/><path d="M1292.5 752L1302.5 762M1302.5 752L1292.5 762" stroke="#ff8a8a" stroke-width="1.5"/><path d="M1448.5 752L1458.5 762M1458.5 752L1448.5 762" stroke="#ff8a8a" stroke-width="1.5"/><path d="M1604.5 752L1614.5 762M1614.5 752L1604.5 762" stroke="#ff8a8a" stroke-width="1.5"/><path d="M1776.4 756.8L1780.9 761.3L1789.8 752.4" fill="none" stroke="#0b7a14" stroke-width="1.8" stroke-linecap="round"/><path d="M638.2 789H644.2L648.2 793V803.5Q648.2 804.7 647 804.7H638.2Q637 804.7 637 803.5V790.2Q637 789 638.2 789Z" fill="#b3b8ec"/><path d="M644.2 789V793H648.2Z" fill="#4848d8"/><rect x="639" y="797.8" width="6.8" height="4.3" fill="#e4e6fc"/><path d="M638.6 796H646.2V797.8H638.6Z M638.6 802H646.2V803H638.6Z" fill="#3c3cd8"/><path d="M639.2 797.5V802.2 M642.4 797.5V802.2 M645.6 797.5V802.2" stroke="#3c3cd8" stroke-width="0.8"/><path d="M371.5 792L381.5 802M381.5 792L371.5 802" stroke="#ff8a8a" stroke-width="1.5"/><path d="M1136.9 796.8L1141.4 801.3L1150.3 792.4" fill="none" stroke="#0b7a14" stroke-width="1.8" stroke-linecap="round"/><path d="M1292.5 792L1302.5 802M1302.5 792L1292.5 802" stroke="#ff8a8a" stroke-width="1.5"/><path d="M1448.5 792L1458.5 802M1458.5 792L1448.5 802" stroke="#ff8a8a" stroke-width="1.5"/><path d="M1604.5 792L1614.5 802M1614.5 792L1604.5 802" stroke="#ff8a8a" stroke-width="1.5"/><path d="M1776.4 796.8L1780.9 801.3L1789.8 792.4" fill="none" stroke="#0b7a14" stroke-width="1.8" stroke-linecap="round"/><path d="M638.2 829H644.2L648.2 833V843.5Q648.2 844.7 647 844.7H638.2Q637 844.7 637 843.5V830.2Q637 829 638.2 829Z" fill="#b3b8ec"/><path d="M644.2 829V833H648.2Z" fill="#4848d8"/><rect x="639" y="837.8" width="6.8" height="4.3" fill="#e4e6fc"/><path d="M638.6 836H646.2V837.8H638.6Z M638.6 842H646.2V843H638.6Z" fill="#3c3cd8"/><path d="M639.2 837.5V842.2 M642.4 837.5V842.2 M645.6 837.5V842.2" stroke="#3c3cd8" stroke-width="0.8"/><path d="M371.5 832L381.5 842M381.5 832L371.5 842" stroke="#ff8a8a" stroke-width="1.5"/><path d="M1136.5 832L1146.5 842M1146.5 832L1136.5 842" stroke="#ff8a8a" stroke-width="1.5"/><path d="M1292.5 832L1302.5 842M1302.5 832L1292.5 842" stroke="#ff8a8a" stroke-width="1.5"/><path d="M1448.5 832L1458.5 842M1458.5 832L1448.5 842" stroke="#ff8a8a" stroke-width="1.5"/><path d="M1604.5 832L1614.5 842M1614.5 832L1604.5 842" stroke="#ff8a8a" stroke-width="1.5"/><path d="M1776.4 836.8L1780.9 841.3L1789.8 832.4" fill="none" stroke="#0b7a14" stroke-width="1.8" stroke-linecap="round"/><path d="M638.2 869H644.2L648.2 873V883.5Q648.2 884.7 647 884.7H638.2Q637 884.7 637 883.5V870.2Q637 869 638.2 869Z" fill="#b3b8ec"/><path d="M644.2 869V873H648.2Z" fill="#4848d8"/><rect x="639" y="877.8" width="6.8" height="4.3" fill="#e4e6fc"/><path d="M638.6 876H646.2V877.8H638.6Z M638.6 882H646.2V883H638.6Z" fill="#3c3cd8"/><path d="M639.2 877.5V882.2 M642.4 877.5V882.2 M645.6 877.5V882.2" stroke="#3c3cd8" stroke-width="0.8"/><path d="M371.5 872L381.5 882M381.5 872L371.5 882" stroke="#ff8a8a" stroke-width="1.5"/><path d="M1136.9 876.8L1141.4 881.3L1150.3 872.4" fill="none" stroke="#0b7a14" stroke-width="1.8" stroke-linecap="round"/><path d="M1292.5 872L1302.5 882M1302.5 872L1292.5 882" stroke="#ff8a8a" stroke-width="1.5"/><path d="M1448.5 872L1458.5 882M1458.5 872L1448.5 882" stroke="#ff8a8a" stroke-width="1.5"/><path d="M1604.5 872L1614.5 882M1614.5 872L1604.5 882" stroke="#ff8a8a" stroke-width="1.5"/><path d="M1776.4 876.8L1780.9 881.3L1789.8 872.4" fill="none" stroke="#0b7a14" stroke-width="1.8" stroke-linecap="round"/></svg>
<div class="a" style="left:321px;top:299px;width:1505px;height:8px;background:linear-gradient(#eef1fc,rgba(248,249,251,0))"></div>
<div class="a" style="left:506.4px;top:255.2px;width:129.3px;height:48.3px;border:4.6px solid #90d33e;border-radius:10px;box-shadow:inset 0 0 7px rgba(60,60,80,0.35),0 2px 5px rgba(60,60,80,0.18)"></div>
<svg style="left:0;top:0" width="1" height="1"><path d="M534.8 265.7H549.8L557.0999999999999 278.8L549.8 291.9H534.8L527.8 278.8Z" fill="#e0e4fb"/></svg>
<svg style="left:0;top:0" width="1" height="1"><path d="M567.3 265.7H582.3L589.5999999999999 278.8L582.3 291.9H567.3L560.3 278.8Z" fill="#e0e4fb"/></svg>
<svg style="left:0;top:0" width="1" height="1"><path d="M599.9 265.7H614.9L622.1999999999999 278.8L614.9 291.9H599.9L592.9 278.8Z" fill="#e0e4fb"/></svg>
<svg style="left:0;top:0" width="1" height="1"><path d="M535.5 278.2Q542.5 269.5 549.5 278.2Q542.5 287 535.5 278.2Z" fill="#8f91e8"/><circle cx="542.5" cy="278.2" r="3" fill="#3333cc"/><path d="M542.5 278.2V275.2A3 3 0 0 0 539.5 278.2Z" fill="#e8e8fb"/></svg>
<svg style="left:0;top:0" width="1" height="1"><g fill="none" stroke="#4343d0" stroke-width="1.3"><path d="M574.5 274H570.8Q569.5 274 569.5 275.3V283.7Q569.5 285 570.8 285H579Q580.3 285 580.3 283.7V280"/><path d="M573.8 281.7L574.3 278.5L580.5 272.3Q581.3 271.5 582.1 272.3L582.7 272.9Q583.5 273.7 582.7 274.5L576.5 280.7Z"/></g></svg>
<svg style="left:0;top:0" width="1" height="1"><g fill="none" stroke="#4343d0" stroke-width="1.2"><path d="M602.5 274.4H613 M605.7 274.4V273Q605.7 272.2 606.5 272.2H609Q609.8 272.2 609.8 273V274.4 M603.6 274.8V283.8Q603.6 285.2 605 285.2H610.5Q611.9 285.2 611.9 283.8V274.8 M606 277V283 M607.75 277V283 M609.5 277V283"/></g></svg>
<div class="a" style="left:1826px;top:259px;width:10px;height:640px;background:#e6ebfc"></div>
<svg style="left:0;top:0" width="1" height="1"><path d="M1828 266H1834L1831 263Z M1828 891.5H1834L1831 894.8Z" fill="#b0b5c2"/></svg>
<div class="a" style="left:321px;top:899px;width:1515px;height:10px;background:#e6ebfc"></div>
<div class="a" style="left:332.8px;top:901px;width:1271px;height:5.6px;background:#b6bcc9;border-radius:3px"></div>
<svg style="left:0;top:0" width="1" height="1"><path d="M327 900.8V906.8L324 903.8Z M1820 900.8V906.8L1823 903.8Z" fill="#b0b5c2"/></svg>
<div class="a" style="left:321px;top:909px;width:1515px;height:1px;background:#e2e4ea"></div>
<svg style="left:0;top:0" width="1" height="1"><g fill="#555"><path d="M338.3 928V936.5H339.7V928Z M346.2 928V936.5L340.5 932.2Z"/><path d="M378 928V936.5L372.2 932.2Z"/><path d="M432.5 928V936.5L438.3 932.2Z"/><path d="M461.5 928V936.5L467.3 932.2Z M467.8 928V936.5H469.2V928Z"/></g></svg>
<div class="a" style="left:389px;top:917px;width:31px;height:40px;background:#cdd1f5"></div>
<div class="a" style="left:389px;top:925px;width:31px;text-align:center;font-size:13px;line-height:16px;color:#4848c8">1</div>
<div class="a" style="left:495px;top:925px;font-size:13px;line-height:16px;color:#333">Page</div>
<div class="a" style="left:532px;top:917px;width:64.5px;height:40px;border:1px solid #e6e9f5;border-radius:5px;background:#f8f9fb"></div>
<div class="a" style="left:543.5px;top:925px;font-size:13px;line-height:16px;color:#333">1</div>
<div class="a" style="left:604px;top:925px;font-size:13px;line-height:16px;color:#333">of 1</div>
<div class="a" style="left:638px;top:917px;width:65px;height:30.5px;border:1px solid #e6e9f5;border-radius:5px;background:#f8f9fb;overflow:hidden"><div class="a" style="left:37px;top:0;width:28px;height:30px;background:#e6eafb"></div></div>
<div class="a" style="left:648.5px;top:925px;font-size:13px;line-height:16px;color:#333">20</div>
<svg style="left:0;top:0" width="1" height="1"><path d="M685 929H693L689 935Z" fill="#3030d0"/></svg>
<div class="a" style="left:710px;top:925px;font-size:13px;line-height:16px;color:#333">items per page</div>
<div class="a" style="left:1690.5px;top:925px;font-size:12.6px;line-height:16px;color:#222">1 - 16 of 16 items</div>
<svg style="left:0;top:0" width="1" height="1"><path d="M1820.3 927.2A6 6 0 1 0 1822 932.3" fill="none" stroke="#222" stroke-width="1.9"/><path d="M1816.8 923.8L1823 925.2L1819.8 930.4Z" fill="#222"/></svg>
<div class="a" style="left:1857px;top:0;width:15px;height:966px;background:#fcfcfc"></div>
<div class="a" style="left:1860px;top:65.5px;width:9px;height:882.5px;background:#8a8a8a;border-radius:5px"></div>
<svg style="left:0;top:0" width="1" height="1"><path d="M1860 11.2H1869L1864.5 5.6Z M1860 954H1869L1864.5 958.8Z" fill="#8a8a8a"/></svg>
<svg style="left:0;top:0" width="1" height="1"><path d="M1872 0V9A9 9 0 0 0 1863 0Z M1872 966V957A9 9 0 0 1 1863 966Z M0 966V957A9 9 0 0 0 9 966Z" fill="#2b2c2e"/></svg>
<div class="a" style="left:0;top:945px;width:622px;height:21px;background:#202124;border-top-right-radius:4px"></div>
<div class="a" style="left:5px;top:948px;font-size:12.2px;line-height:16px;color:#e8eaed;-webkit-text-stroke:0.2px #e8eaed">https://en-oxari.infonet-projekt.com/HelpdeskFormDefinitions/Details?id=13bb93f1-cf3b-43ad-bd51-7f48b416aef2</div>
</body></html>
